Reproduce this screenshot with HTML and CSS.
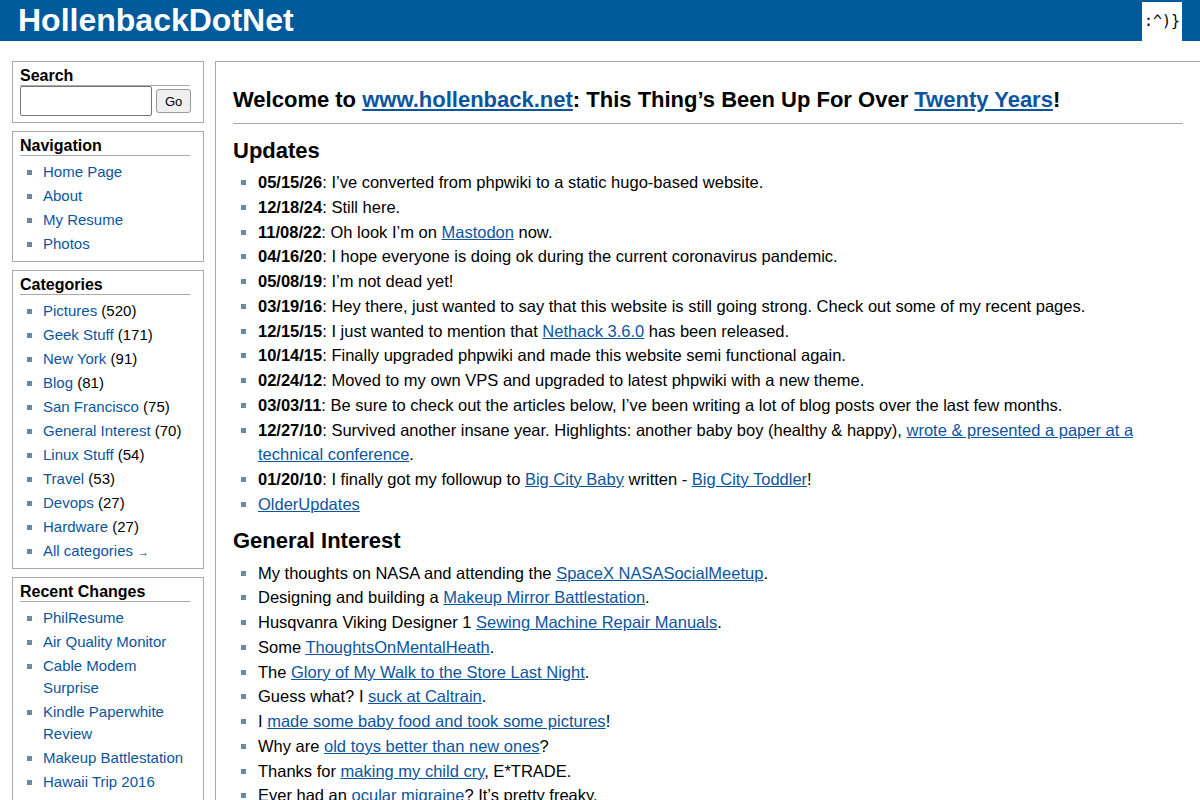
FILE: index.html
```html
<!DOCTYPE html>
<html lang="en">
<head>
    <meta charset="UTF-8">
    <title>HollenbackDotNet</title>
    <link rel="stylesheet" href="styles.css">
</head>
<body>
    <!-- top bar -->
    <header class="topbar">
        <a class="sitename" href="#">HollenbackDotNet</a>
        <span class="smiley">:^)}</span>
    </header>

    <div class="page">
        <!-- left column -->
        <aside class="sidebar">
            <div class="box">
                <h3>Search</h3>
                <form class="search">
                    <input type="text" class="search-input">
                    <button type="button" class="search-go">Go</button>
                </form>
            </div>

            <div class="box">
                <h3>Navigation</h3>
                <ul>
                    <li><a href="#">Home Page</a></li>
                    <li><a href="#">About</a></li>
                    <li><a href="#">My Resume</a></li>
                    <li><a href="#">Photos</a></li>
                </ul>
            </div>

            <div class="box">
                <h3>Categories</h3>
                <ul>
                    <li><a href="#">Pictures</a> (520)</li>
                    <li><a href="#">Geek Stuff</a> (171)</li>
                    <li><a href="#">New York</a> (91)</li>
                    <li><a href="#">Blog</a> (81)</li>
                    <li><a href="#">San Francisco</a> (75)</li>
                    <li><a href="#">General Interest</a> (70)</li>
                    <li><a href="#">Linux Stuff</a> (54)</li>
                    <li><a href="#">Travel</a> (53)</li>
                    <li><a href="#">Devops</a> (27)</li>
                    <li><a href="#">Hardware</a> (27)</li>
                    <li><a href="#">All categories <span class="arrow">&rarr;</span></a></li>
                </ul>
            </div>

            <div class="box">
                <h3>Recent Changes</h3>
                <ul>
                    <li><a href="#">PhilResume</a></li>
                    <li><a href="#">Air Quality Monitor</a></li>
                    <li><a href="#">Cable Modem Surprise</a></li>
                    <li><a href="#">Kindle Paperwhite Review</a></li>
                    <li><a href="#">Makeup Battlestation</a></li>
                    <li><a href="#">Hawaii Trip 2016</a></li>
                    <li><a href="#">SpaceX Nasa Social Meetup</a></li>
                    <li><a href="#">Nethack 3.6.0</a></li>
                </ul>
            </div>
        </aside>

        <!-- main column -->
        <main class="content">
            <h1>Welcome to <a href="#">www.hollenback.net</a>: This Thing’s Been Up For Over <a href="#">Twenty Years</a>!</h1>

            <h2>Updates</h2>
            <ul>
                <li><b>05/15/26</b>: I’ve converted from phpwiki to a static hugo-based website.</li>
                <li><b>12/18/24</b>: Still here.</li>
                <li><b>11/08/22</b>: Oh look I’m on <a href="#">Mastodon</a> now.</li>
                <li><b>04/16/20</b>: I hope everyone is doing ok during the current coronavirus pandemic.</li>
                <li><b>05/08/19</b>: I’m not dead yet!</li>
                <li><b>03/19/16</b>: Hey there, just wanted to say that this website is still going strong. Check out some of my recent pages.</li>
                <li><b>12/15/15</b>: I just wanted to mention that <a href="#">Nethack 3.6.0</a> has been released.</li>
                <li><b>10/14/15</b>: Finally upgraded phpwiki and made this website semi functional again.</li>
                <li><b>02/24/12</b>: Moved to my own VPS and upgraded to latest phpwiki with a new theme.</li>
                <li><b>03/03/11</b>: Be sure to check out the articles below, I’ve been writing a lot of blog posts over the last few months.</li>
                <li><b>12/27/10</b>: Survived another insane year. Highlights: another baby boy (healthy &amp; happy), <a href="#">wrote &amp; presented a paper at a technical conference</a>.</li>
                <li><b>01/20/10</b>: I finally got my followup to <a href="#">Big City Baby</a> written - <a href="#">Big City Toddler</a>!</li>
                <li><a href="#">OlderUpdates</a></li>
            </ul>

            <h2>General Interest</h2>
            <ul>
                <li>My thoughts on NASA and attending the <a href="#">SpaceX NASASocialMeetup</a>.</li>
                <li>Designing and building a <a href="#">Makeup Mirror Battlestation</a>.</li>
                <li>Husqvanra Viking Designer 1 <a href="#">Sewing Machine Repair Manuals</a>.</li>
                <li>Some <a href="#">ThoughtsOnMentalHeath</a>.</li>
                <li>The <a href="#">Glory of My Walk to the Store Last Night</a>.</li>
                <li>Guess what? I <a href="#">suck at Caltrain</a>.</li>
                <li>I <a href="#">made some baby food and took some pictures</a>!</li>
                <li>Why are <a href="#">old toys better than new ones</a>?</li>
                <li>Thanks for <a href="#">making my child cry</a>, E*TRADE.</li>
                <li>Ever had an <a href="#">ocular migraine</a>? It’s pretty freaky.</li>
                <li>How to <a href="#">fix a broken mac mini</a>.</li>
            </ul>
        </main>
    </div>
</body>
</html>
```

FILE: styles.css
```css
html,
body {
    margin: 0;
    padding: 0;
}

body {
    background: #fff;
    color: #000;
    font-family: "Liberation Sans", Arial, sans-serif;
    font-size: 15px;
}

a {
    color: #0b55a0;
}

/* top bar */
.topbar {
    display: flex;
    justify-content: space-between;
    align-items: center;
    height: 41px;
    padding: 0 18px;
    background: #005a9c;
}

.sitename {
    color: #fff;
    font-size: 32px;
    font-weight: bold;
    line-height: 41px;
    text-decoration: none;
}

.smiley {
    display: flex;
    align-items: center;
    justify-content: center;
    width: 40px;
    height: 39px;
    margin-top: 1px;
    background: #fff;
    color: #000;
    font-family: "DejaVu Sans Mono", monospace;
    font-size: 15px;
}

/* two columns */
.page {
    display: flex;
    align-items: flex-start;
    gap: 11px;
    padding: 20px 0 0 12px;
}

/* sidebar boxes */
.sidebar {
    display: flex;
    flex-direction: column;
    gap: 8px;
    width: 192px;
    flex-shrink: 0;
}

.box {
    border: 1px solid #aaa;
    padding: 4px 13px 4px 7px;
}

.box h3 {
    margin: 0;
    font-size: 16px;
    line-height: 19px;
    border-bottom: 1px solid #aaa;
}

.box ul {
    margin: 5px 0 0;
    padding-left: 23px;
    list-style: square;
}

.box li {
    line-height: 22px;
    margin-bottom: 2px;
}

.box li::marker {
    color: #6a8aa2;
}

.box a {
    text-decoration: none;
}

.arrow {
    font-size: 12px;
    line-height: 0;
}

/* search form */
.search {
    display: flex;
    align-items: center;
    gap: 4px;
    margin-bottom: 2px;
}

.search-input {
    box-sizing: border-box;
    width: 132px;
    height: 30px;
    margin: 0;
    border: 1px solid #767676;
    border-radius: 2px;
}

.search-go {
    height: 24px;
    padding: 0 8px;
    background: #efefef;
    border: 1px solid #999;
    border-radius: 3px;
    font-family: "Liberation Sans", Arial, sans-serif;
    font-size: 13px;
    color: #000;
}

/* main column */
.content {
    flex: 1;
    min-width: 0;
    border: 1px solid #aaa;
    border-right: 0;
    padding: 25px 17px 20px;
    font-size: 16.5px;
}

.content h1 {
    margin: 0;
    padding-bottom: 10px;
    font-size: 22px;
    line-height: 26px;
    border-bottom: 1px solid #aaa;
}

.content h2 {
    margin: 14px 0 6px;
    font-size: 22px;
    line-height: 26px;
}

.content ul + h2 {
    margin: 11px 0 7px;
}

.content ul {
    margin: 0;
    padding-left: 25px;
    list-style: square;
}

.content li {
    line-height: 24.75px;
}

.content li::marker {
    color: #6a8aa2;
}
```
